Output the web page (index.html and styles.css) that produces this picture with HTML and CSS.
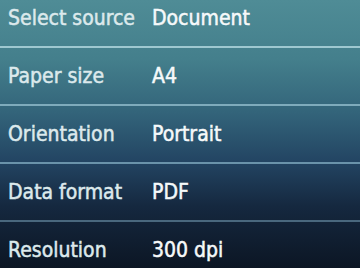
FILE: index.html
```html
<!DOCTYPE html>
<html>
<head>
<meta charset="utf-8">
<link rel="stylesheet" href="styles.css">
</head>
<body>
<div class="screen">
  <div class="row"><span class="label">Select source</span><span class="value">Document</span></div>
  <div class="row"><span class="label">Paper size</span><span class="value">A4</span></div>
  <div class="row"><span class="label">Orientation</span><span class="value">Portrait</span></div>
  <div class="row"><span class="label">Data format</span><span class="value">PDF</span></div>
  <div class="row"><span class="label">Resolution</span><span class="value">300 dpi</span></div>
</div>
</body>
</html>
```
FILE: styles.css
```css
html, body {
  margin: 0;
  padding: 0;
  width: 360px;
  height: 268px;
  overflow: hidden;
}
body {
  background: linear-gradient(to bottom, #4f8c96 0%, #447f8c 22%, #33647a 42%, #234563 60%, #15283f 77%, #0c1624 100%);
  font-family: "DejaVu Sans Condensed", "DejaVu Sans", sans-serif;
  font-weight: normal;
}
.screen {
  display: flex;
  flex-direction: column;
  margin-top: -10px;
}
.row {
  height: 56px;
  display: flex;
  align-items: center;
  padding-left: 8px;
  font-size: 21px;
  -webkit-text-stroke: 0.5px currentColor;
  border-bottom: 2px solid #9fc8d0;
}
.row:nth-child(2) { border-bottom-color: #7fabbc; }
.row:nth-child(3) { border-bottom-color: #6a93aa; }
.row:nth-child(4) { border-bottom-color: #4a687e; }
.row:nth-child(5) { border-bottom: none; }
.label {
  width: 144px;
  color: #dce9ec;
}
.value {
  color: #f6f9fa;
}
```
